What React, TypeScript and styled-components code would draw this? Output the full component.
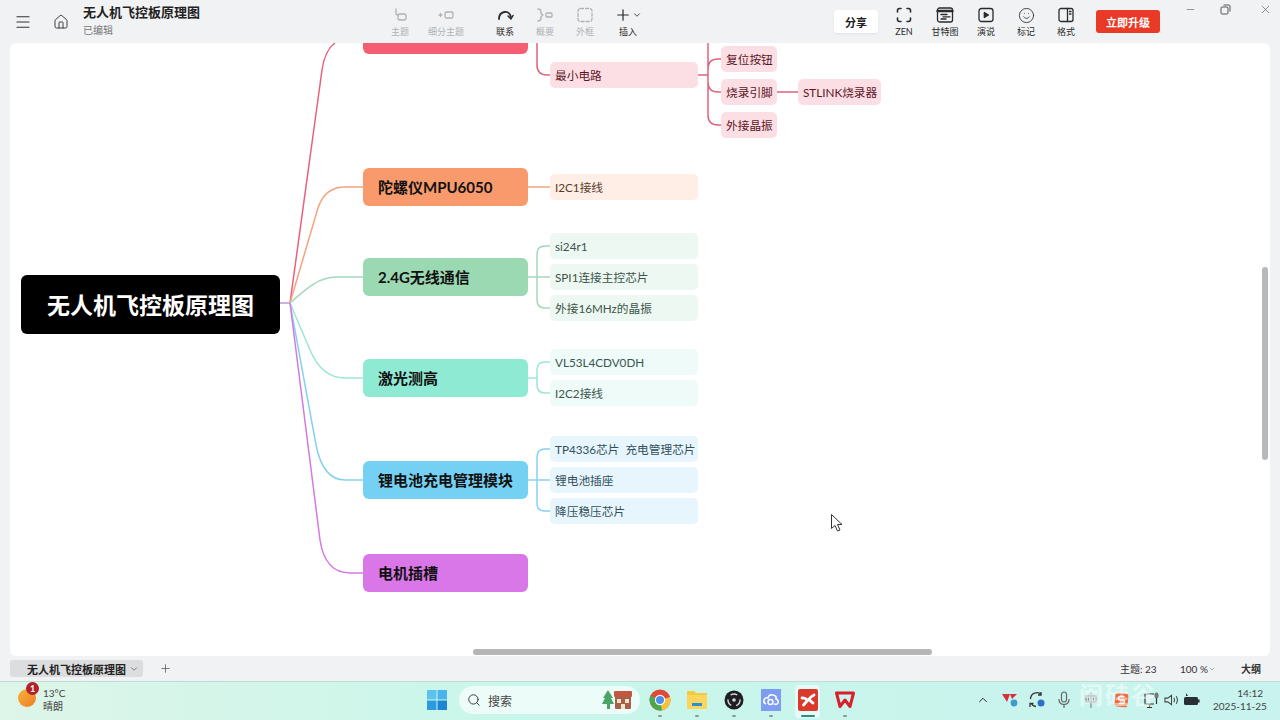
import React from 'react'
import styled, { createGlobalStyle } from 'styled-components'
import { ChevronDown, ChevronUp, House, Menu, Minus, Plus, Search, Smile, X } from 'lucide-react'

const GlobalStyle = createGlobalStyle`
  html, body { margin: 0; padding: 0; width: 1280px; height: 720px; overflow: hidden; }
  body { font-family: Lato, "Noto Sans CJK SC", sans-serif; background: #f1f2f4; color: #222; }
`

const Page = styled.div`
  position: relative;
  display: flex;
  flex-direction: column;
  width: 1280px;
  height: 720px;
  overflow: hidden;
`

/* title bar */
const TitleBar = styled.header`
  display: flex;
  align-items: flex-start;
  flex: none;
  height: 43px;
  background: #f1f2f4;
`
const DocArea = styled.div`
  display: flex;
  align-items: center;
  width: 380px;
  height: 43px;
  flex: none;
`
const BarIcon = styled.span`
  display: flex;
  align-items: center;
  justify-content: center;
  flex: none;
  width: ${p => p.$w}px;
  color: #333;
`
const DocTitle = styled.div`
  display: flex;
  flex-direction: column;
  gap: 3px;
  margin-top: -3px;
`
const DocName = styled.div`
  font-size: 13px;
  line-height: 18px;
  font-weight: 700;
  color: #222;
`
const DocState = styled.div`
  font-size: 10px;
  line-height: 13px;
  color: #777;
`
const ToolItem = styled.div`
  display: flex;
  flex-direction: column;
  align-items: center;
  flex: none;
  width: 40px;
  height: 43px;
  padding-top: 6px;
  box-sizing: border-box;
  margin-left: ${p => p.$gap || 0}px;
  color: ${p => (p.$off ? '#aeb2b6' : '#2b2b2b')};
`
const ToolIcon = styled.div`
  display: flex;
  align-items: center;
  justify-content: center;
  height: 18px;
`
const ToolLabel = styled.div`
  margin-top: 1px;
  font-size: 9px;
  line-height: 13px;
  white-space: nowrap;
`
const ShareButton = styled.button`
  flex: none;
  width: 44px;
  height: 23px;
  margin: 10px 0 0 186px;
  padding: 0;
  border: 0;
  border-radius: 3px;
  background: #fff;
  box-shadow: 0 1px 2px rgba(0, 0, 0, 0.08);
  font: 700 11px Lato, "Noto Sans CJK SC", sans-serif;
  color: #222;
`
const UpgradeButton = styled.button`
  flex: none;
  width: 64px;
  height: 23px;
  margin: 10px 0 0 10px;
  padding: 0;
  border: 0;
  border-radius: 3px;
  background: #e83a26;
  font: 700 11px Lato, "Noto Sans CJK SC", sans-serif;
  color: #fff;
`
const WindowControls = styled.div`
  display: flex;
  align-items: center;
  margin-left: 18px;
  height: 18px;
  color: #555;
`
const WinButton = styled.span`
  display: flex;
  justify-content: center;
  width: ${p => p.$w}px;
`

/* mind map canvas */
const Canvas = styled.main`
  position: relative;
  flex: 1;
  margin: 0 10px;
  background: #fff;
  border-radius: 6px;
  overflow: hidden;
`
const Links = styled.svg`
  position: absolute;
  left: 0;
  top: 0;
  width: 1260px;
  height: 613px;
  fill: none;
  stroke-width: 1.5;
`
const RootNode = styled.div`
  position: absolute;
  left: 11px;
  top: 232px;
  width: 259px;
  height: 59px;
  padding-bottom: 2px;
  box-sizing: border-box;
  display: flex;
  align-items: center;
  justify-content: center;
  background: #000;
  border-radius: 6px;
  color: #fff;
  font-size: 23px;
  font-weight: 700;
`
const TopicNode = styled.div`
  position: absolute;
  left: 353px;
  top: ${p => p.$y - 43}px;
  width: 165px;
  height: 38px;
  padding: 0 0 2px 15px;
  box-sizing: border-box;
  display: flex;
  align-items: center;
  background: ${p => p.$bg};
  border-radius: 6px;
  color: #111;
  font-size: 15px;
  font-weight: 700;
  white-space: nowrap;
`
const SubNode = styled.div`
  position: absolute;
  left: ${p => p.$x - 10}px;
  top: ${p => p.$cy - 56}px;
  width: ${p => p.$w}px;
  height: 26px;
  padding: 0 0 1px 5px;
  box-sizing: border-box;
  display: flex;
  align-items: center;
  background: ${p => p.$bg};
  border-radius: 5px;
  color: ${p => p.$fg};
  font-size: 11.7px;
  white-space: pre;
`
const VerticalThumb = styled.div`
  position: absolute;
  right: 2px;
  top: 224px;
  width: 6px;
  height: 193px;
  border-radius: 3px;
  background: #b9b9b9;
`
const HorizontalThumb = styled.div`
  position: absolute;
  left: 463px;
  bottom: 1px;
  width: 459px;
  height: 6px;
  border-radius: 3px;
  background: #b5b5b5;
`
const Pointer = styled.svg`
  position: absolute;
  left: 820px;
  top: 470px;
`

/* sheet tabs / status */
const StatusBar = styled.div`
  display: flex;
  align-items: center;
  flex: none;
  height: 25px;
  padding: 0 17px 0 10px;
  background: #f1f2f4;
  font-size: 10px;
  color: #333;
`
const SheetTab = styled.div`
  display: flex;
  align-items: center;
  width: 133px;
  height: 17px;
  padding-left: 17px;
  box-sizing: border-box;
  gap: 3px;
  background: #dcddde;
  border-radius: 3px;
  font-size: 11px;
  font-weight: 700;
  color: #222;
  white-space: nowrap;
`
const AddSheet = styled.span`
  display: flex;
  margin-left: 16px;
  color: #555;
`
const StatusRight = styled.div`
  display: flex;
  align-items: center;
  margin-left: auto;
`
const StatusText = styled.span`
  display: flex;
  align-items: center;
  width: ${p => p.$w}px;
  font-weight: ${p => (p.$strong ? 700 : 400)};
  white-space: nowrap;
`

/* windows taskbar */
const Taskbar = styled.footer`
  display: flex;
  align-items: center;
  flex: none;
  height: 39px;
  box-sizing: border-box;
  padding: 0 17px 2px 0;
  border-top: 1px solid #bcdcd5;
  background: linear-gradient(90deg, #def5e9 0%, #c9f6ea 40%, #c8f3ef 100%);
`
const Weather = styled.div`
  position: relative;
  display: flex;
  align-items: center;
  flex: none;
  width: 427px;
  padding-left: 43px;
  box-sizing: border-box;
`
const WeatherSun = styled.span`
  position: absolute;
  left: 18px;
  top: 2px;
  width: 18px;
  height: 18px;
  border-radius: 50%;
  background: linear-gradient(135deg, #f7b33a, #ee7d28);
`
const WeatherBadge = styled.span`
  position: absolute;
  left: 26px;
  top: -5px;
  width: 13px;
  height: 13px;
  border-radius: 50%;
  background: #b3202a;
  color: #fff;
  font-size: 9px;
  font-weight: 700;
  line-height: 13px;
  text-align: center;
`
const WeatherText = styled.div`
  font-size: 10px;
  line-height: 13px;
  color: #444;
`
const WinLogo = styled.svg`
  flex: none;
`
const SearchBox = styled.div`
  display: flex;
  align-items: center;
  gap: 7px;
  flex: none;
  width: 181px;
  height: 28px;
  margin-left: 12px;
  padding-left: 8px;
  box-sizing: border-box;
  border-radius: 14px;
  background: rgba(255, 255, 255, 0.65);
  color: #444;
  font-size: 12px;
`
const SearchArt = styled.svg`
  margin-left: auto;
  margin-right: 7px;
`
const AppSlot = styled.div`
  position: relative;
  display: flex;
  align-items: center;
  justify-content: center;
  flex: none;
  width: 37px;
  height: 36px;
  &::after {
    content: '';
    position: absolute;
    bottom: 1px;
    left: 50%;
    width: ${p => (p.$active ? 14 : 4)}px;
    height: 2px;
    margin-left: ${p => (p.$active ? -7 : -2)}px;
    border-radius: 1px;
    background: ${p => (p.$active ? '#2f8f86' : '#8a9a98')};
  }
  &::before {
    content: '';
    display: ${p => (p.$active ? 'block' : 'none')};
    position: absolute;
    left: 6px;
    right: 6px;
    top: 3px;
    bottom: 0;
    border-radius: 4px;
    background: rgba(255, 255, 255, 0.55);
  }
  & > svg { position: relative; }
`
const AppRow = styled.div`
  display: flex;
  margin-left: 1px;
`
const Tray = styled.div`
  display: flex;
  align-items: center;
  margin-left: auto;
`
const TraySlot = styled.span`
  display: flex;
  align-items: center;
  justify-content: center;
  flex: none;
  width: ${p => p.$w}px;
  color: #555;
`
const Clock = styled.div`
  width: 50px;
  margin-left: 12px;
  font-size: 10px;
  line-height: 13px;
  color: #444;
  text-align: right;
  white-space: nowrap;
`
const Watermark = styled.div`
  position: absolute;
  left: 1079px;
  top: 676px;
  font-size: 24px;
  font-weight: 700;
  letter-spacing: 2px;
  color: rgba(255, 255, 255, 0.5);
  pointer-events: none;
`

const subTone = {
  red: { bg: '#fcdfe4', fg: '#5c1526', line: '#e0637c' },
  orange: { bg: '#feeee6', fg: '#5d3a28', line: '#f4a37e' },
  green: { bg: '#eef8f3', fg: '#3c5448', line: '#a3d8ba' },
  teal: { bg: '#eefbf8', fg: '#3c5650', line: '#9ce6d3' },
  blue: { bg: '#e7f6fc', fg: '#34505c', line: '#86d2ee' },
}

const topics = [
  { y: 16, text: '', bg: '#f55d73' },
  { y: 168, text: '陀螺仪MPU6050', bg: '#f89a6c' },
  { y: 258, text: '2.4G无线通信', bg: '#9bd9b3' },
  { y: 359, text: '激光测高', bg: '#8eead3' },
  { y: 461, text: '锂电池充电管理模块', bg: '#74d1f4' },
  { y: 554, text: '电机插槽', bg: '#d977e8' },
]

const subs = [
  { x: 550, cy: 75, w: 148, tone: 'red', text: '最小电路' },
  { x: 721, cy: 59, w: 56, tone: 'red', text: '复位按钮' },
  { x: 721, cy: 92, w: 56, tone: 'red', text: '烧录引脚' },
  { x: 721, cy: 125, w: 56, tone: 'red', text: '外接晶振' },
  { x: 798, cy: 92, w: 83, tone: 'red', text: 'STLINK烧录器' },
  { x: 550, cy: 187, w: 148, tone: 'orange', text: 'I2C1接线' },
  { x: 550, cy: 246, w: 148, tone: 'green', text: 'si24r1' },
  { x: 550, cy: 277, w: 148, tone: 'green', text: 'SPI1连接主控芯片' },
  { x: 550, cy: 308, w: 148, tone: 'green', text: '外接16MHz的晶振' },
  { x: 550, cy: 362, w: 148, tone: 'teal', text: 'VL53L4CDV0DH' },
  { x: 550, cy: 393, w: 148, tone: 'teal', text: 'I2C2接线' },
  { x: 550, cy: 449, w: 148, tone: 'blue', text: 'TP4336芯片  充电管理芯片' },
  { x: 550, cy: 480, w: 148, tone: 'blue', text: '锂电池插座' },
  { x: 550, cy: 511, w: 148, tone: 'blue', text: '降压稳压芯片' },
]

// path coordinates are page coordinates, the viewBox shifts them onto the canvas
const links = [
  { color: '#b79ad8', d: 'M280 303 H290' },
  { color: '#e9607c', d: 'M290 303 L322 70 Q325 50 335 43' },
  { color: '#f4a37e', d: 'M290 303 L318 208 Q325 187 345 187 H363' },
  { color: '#a3d8ba', d: 'M290 303 C305 290 318 277 336 277 H363' },
  { color: '#9ce6d3', d: 'M290 303 L310 350 Q322 378 345 378 H363' },
  { color: '#86d2ee', d: 'M290 303 L316 445 Q323 480 345 480 H363' },
  { color: '#d27ae2', d: 'M290 303 L320 540 Q325 573 350 573 H363' },
  { color: '#e0637c', d: 'M537 43 V65 Q537 75 547 75 H550' },
  { color: '#e0637c', d: 'M698 75 H708 M708 43 V115 Q708 125 718 125 H721 M708 69 Q708 59 718 59 H721 M708 82 Q708 92 718 92 H721 M777 92 H798' },
  { color: '#f4a37e', d: 'M528 187 H550' },
  { color: '#a3d8ba', d: 'M528 277 H550 M550 246 H545 Q537 246 537 254 V300 Q537 308 545 308 H550' },
  { color: '#9ce6d3', d: 'M528 378 H537 M550 362 H545 Q537 362 537 370 V385 Q537 393 545 393 H550' },
  { color: '#86d2ee', d: 'M528 480 H550 M550 449 H545 Q537 449 537 457 V503 Q537 511 545 511 H550' },
]

const Line: React.FC<{ size?: number; children: React.ReactNode }> = ({ size = 18, children }) => (
  <svg width={size} height={size} viewBox='0 0 18 18' fill='none' stroke='currentColor' strokeWidth='1.3' strokeLinecap='round' strokeLinejoin='round'>
    {children}
  </svg>
)

const App: React.FC = () => (
  <Page>
    <GlobalStyle />
    <TitleBar>
      <DocArea>
        <BarIcon $w={46}><Menu size={18} strokeWidth={1.6} /></BarIcon>
        <BarIcon $w={30}><House size={16} strokeWidth={1.4} /></BarIcon>
        <BarIcon $w={7} />
        <DocTitle>
          <DocName>无人机飞控板原理图</DocName>
          <DocState>已编辑</DocState>
        </DocTitle>
      </DocArea>
      <ToolItem $off>
        <ToolIcon><Line><path d='M5 3 V7 Q5 9 7 9' /><rect x='7' y='8' width='8' height='6' rx='2' /></Line></ToolIcon>
        <ToolLabel>主题</ToolLabel>
      </ToolItem>
      <ToolItem $off $gap={6}>
        <ToolIcon><Line><path d='M2 9 H5 M3.5 7.5 V10.5' /><rect x='8' y='6' width='8' height='6' rx='1.5' /></Line></ToolIcon>
        <ToolLabel>细分主题</ToolLabel>
      </ToolItem>
      <ToolItem $gap={19}>
        <ToolIcon><Line><path d='M3 13 C3 5 13 3 15 11' strokeWidth='1.8' /><path d='M12 10 L15 13 L17 9.5' strokeWidth='1.5' /></Line></ToolIcon>
        <ToolLabel>联系</ToolLabel>
      </ToolItem>
      <ToolItem $off>
        <ToolIcon><Line><path d='M2 3 Q5 3 5 6 V7.5 L7 9 L5 10.5 V12 Q5 15 2 15' /><rect x='10' y='7' width='6' height='4' rx='1' /></Line></ToolIcon>
        <ToolLabel>概要</ToolLabel>
      </ToolItem>
      <ToolItem $off>
        <ToolIcon><Line><rect x='2' y='2.5' width='14' height='13' rx='2.5' strokeDasharray='3 2' /></Line></ToolIcon>
        <ToolLabel>外框</ToolLabel>
      </ToolItem>
      <ToolItem $gap={3}>
        <ToolIcon><Plus size={18} strokeWidth={1.6} /><ChevronDown size={10} strokeWidth={2} /></ToolIcon>
        <ToolLabel>插入</ToolLabel>
      </ToolItem>
      <ShareButton>分享</ShareButton>
      <ToolItem $gap={6}>
        <ToolIcon><Line><path d='M2.5 6 V4.5 Q2.5 2.5 4.5 2.5 H6 M12 2.5 H13.5 Q15.5 2.5 15.5 4.5 V6 M15.5 12 V13.5 Q15.5 15.5 13.5 15.5 H12 M6 15.5 H4.5 Q2.5 15.5 2.5 13.5 V12' strokeWidth='1.6' /></Line></ToolIcon>
        <ToolLabel>ZEN</ToolLabel>
      </ToolItem>
      <ToolItem $gap={1}>
        <ToolIcon><Line><rect x='1.5' y='2' width='15' height='14' rx='2' /><path d='M1.5 5 H16.5' strokeWidth='2.4' /><path d='M5 8.5 H11 M7 10.8 H14 M5 13 H10' /></Line></ToolIcon>
        <ToolLabel>甘特图</ToolLabel>
      </ToolItem>
      <ToolItem $gap={1}>
        <ToolIcon>
          <Line><rect x='2' y='2.5' width='14' height='13' rx='2.5' /><path d='M7.3 6.5 L11.5 9 L7.3 11.5 Z' fill='currentColor' /></Line>
        </ToolIcon>
        <ToolLabel>演说</ToolLabel>
      </ToolItem>
      <ToolItem>
        <ToolIcon><Smile size={17} strokeWidth={1.2} /></ToolIcon>
        <ToolLabel>标记</ToolLabel>
      </ToolItem>
      <ToolItem>
        <ToolIcon><Line><rect x='2' y='2.5' width='14' height='13' rx='2' /><path d='M10.5 2.5 V15.5' /><path d='M12.5 5.5 H14 M12.5 8 H14' /></Line></ToolIcon>
        <ToolLabel>格式</ToolLabel>
      </ToolItem>
      <UpgradeButton>立即升级</UpgradeButton>
      <WindowControls>
        <WinButton $w={24}><Minus size={11} strokeWidth={1.3} /></WinButton>
        <WinButton $w={46}>
          <svg width='11' height='11' viewBox='0 0 11 11' fill='none' stroke='currentColor' strokeWidth='1'>
            <rect x='1' y='3' width='7' height='7' rx='1' />
            <path d='M3.5 1 H9 Q10 1 10 2 V7.5' />
          </svg>
        </WinButton>
        <WinButton $w={34}><X size={13} strokeWidth={1.2} /></WinButton>
      </WindowControls>
    </TitleBar>

    <Canvas>
      <Links viewBox='10 43 1260 613'>
        {links.map(l => <path key={l.d} d={l.d} stroke={l.color} />)}
      </Links>
      <RootNode>无人机飞控板原理图</RootNode>
      {topics.map(t => <TopicNode key={t.y} $y={t.y} $bg={t.bg}>{t.text}</TopicNode>)}
      {subs.map(s => (
        <SubNode key={s.text} $x={s.x} $cy={s.cy} $w={s.w} $bg={subTone[s.tone].bg} $fg={subTone[s.tone].fg}>
          {s.text}
        </SubNode>
      ))}
      <VerticalThumb />
      <HorizontalThumb />
      <Pointer width='14' height='20' viewBox='0 0 14 20' fill='#fff' stroke='#333' strokeWidth='1'>
        <path d='M1.5 1.5 V15.5 L5 12.5 L7.5 18 L10 17 L7.5 11.5 H12 Z' />
      </Pointer>
    </Canvas>

    <StatusBar>
      <SheetTab>无人机飞控板原理图<ChevronDown size={10} color='#666' /></SheetTab>
      <AddSheet><Plus size={13} strokeWidth={1.4} /></AddSheet>
      <StatusRight>
        <StatusText $w={60}>主题: 23</StatusText>
        <StatusText $w={61}>100 %<ChevronDown size={8} color='#888' /></StatusText>
        <StatusText $w={22} $strong>大纲</StatusText>
      </StatusRight>
    </StatusBar>

    <Taskbar>
      <Weather>
        <WeatherSun />
        <WeatherBadge>1</WeatherBadge>
        <WeatherText>13°C<br />晴朗</WeatherText>
      </Weather>
      <WinLogo width='20' height='20' viewBox='0 0 20 20'>
        <rect x='0' y='0' width='9.5' height='9.5' fill='#5cc3ee' />
        <rect x='10.5' y='0' width='9.5' height='9.5' fill='#4ab5ea' />
        <rect x='0' y='10.5' width='9.5' height='9.5' fill='#2a9be0' />
        <rect x='10.5' y='10.5' width='9.5' height='9.5' fill='#1c86d4' />
      </WinLogo>
      <SearchBox>
        <Search size={14} strokeWidth={1.6} color='#333' />
        搜索
        <SearchArt width='32' height='22' viewBox='0 0 32 22'>
          <path d='M7 1 L12 9 H10 L13 15 H9 V20 H6 V15 H1 L4 9 H2 Z' fill='#4aa564' />
          <rect x='14' y='3' width='16' height='17' rx='1' fill='#a5604a' />
          <rect x='13' y='2' width='18' height='6' rx='1' fill='#c2583f' />
          <rect x='16' y='10' width='4' height='4' fill='#f4e3c8' />
          <rect x='24' y='10' width='4' height='4' fill='#f4e3c8' />
          <rect x='20' y='15' width='4' height='5' fill='#f4e3c8' />
        </SearchArt>
      </SearchBox>
      <AppRow>
        <AppSlot>
          <svg width='22' height='22' viewBox='0 0 22 22'>
            <circle cx='11' cy='11' r='10.5' fill='#e0483c' />
            <path d='M11 11 L2 16 A10.5 10.5 0 0 1 1.5 6.5 Z' fill='#4aa84f' />
            <path d='M11 11 L2 16 A10.5 10.5 0 0 0 15 20.7 Z' fill='#4aa84f' />
            <path d='M11 11 L21 8 A10.5 10.5 0 0 1 13 21.3 Z' fill='#f5c33b' />
            <circle cx='11' cy='11' r='5.2' fill='#fff' />
            <circle cx='11' cy='11' r='4' fill='#4b8fe8' />
          </svg>
        </AppSlot>
        <AppSlot>
          <svg width='22' height='20' viewBox='0 0 22 20'>
            <path d='M1 2 Q1 1 2 1 H8 L10 3 H21 V18 Q21 19 20 19 H2 Q1 19 1 18 Z' fill='#f6c93f' />
            <rect x='1' y='5' width='20' height='14' rx='1' fill='#fbd65a' />
            <rect x='6' y='13' width='10' height='3' fill='#2a8fd8' />
          </svg>
        </AppSlot>
        <AppSlot>
          <svg width='20' height='20' viewBox='0 0 20 20' fill='none'>
            <circle cx='10' cy='10' r='9.5' fill='#1d1f22' />
            <circle cx='10' cy='10' r='6' stroke='#d8d8d8' strokeWidth='1.4' strokeDasharray='7 5' />
            <circle cx='10' cy='10' r='1.8' fill='#d8d8d8' />
          </svg>
        </AppSlot>
        <AppSlot>
          <svg width='20' height='22' viewBox='0 0 20 22' fill='none'>
            <rect width='20' height='22' fill='#7d9cf2' />
            <path d='M5 15 Q2 14 3 11 Q4 8 7 9 Q8 5 12 6 Q16 7 15 10 Q18 11 17 14 Q16 16 13 15' stroke='#fff' strokeWidth='1.6' />
            <circle cx='9.5' cy='13' r='2.5' stroke='#fff' strokeWidth='1.4' />
          </svg>
        </AppSlot>
        <AppSlot $active>
          <svg width='20' height='22' viewBox='0 0 20 22' fill='none'>
            <rect width='20' height='22' rx='2' fill='#d93a2b' />
            <path d='M4 9 Q7 8.5 9.5 11.5 L5.5 16 M16 6 Q13 7.5 11 10 Q13 13 15 14' stroke='#fff' strokeWidth='2.8' strokeLinecap='round' />
          </svg>
        </AppSlot>
        <AppSlot>
          <svg width='20' height='18' viewBox='0 0 20 18' fill='none'>
            <path d='M1.5 2 H18.5 L15 15.5 L10 9 L5 15.5 Z' stroke='#d8202c' strokeWidth='3' strokeLinejoin='round' />
          </svg>
        </AppSlot>
      </AppRow>
      <Tray>
        <TraySlot $w={27}><ChevronUp size={14} strokeWidth={1.6} color='#222' /></TraySlot>
        <TraySlot $w={27}>
          <svg width='16' height='14' viewBox='0 0 16 14'>
            <path d='M0 1 H8 L5 9 Z' fill='#d8303a' />
            <path d='M8 1 H15 L10 6 Z' fill='#d8303a' />
            <circle cx='12' cy='10' r='3.4' fill='#3f9ccc' />
          </svg>
        </TraySlot>
        <TraySlot $w={27}>
          <svg width='18' height='18' viewBox='0 0 18 18' fill='none' stroke='#333' strokeWidth='1.3'>
            <path d='M2.5 8 A6.5 6.5 0 0 1 13.5 3.5 M13 1 V4 H10' />
            <path d='M3 12 A6.5 6.5 0 0 0 8 15.5 M2 16 V12.5 H5.5' />
            <circle cx='13' cy='12' r='3.5' fill='#2f6fc8' stroke='none' />
          </svg>
        </TraySlot>
        <TraySlot $w={27}>
          <svg width='12' height='18' viewBox='0 0 12 18' fill='none' stroke='#666' strokeWidth='1.2'>
            <rect x='3.5' y='1' width='5' height='10' rx='2.5' />
            <path d='M1 8 Q1 13.5 6 13.5 Q11 13.5 11 8 M6 13.5 V17' />
          </svg>
        </TraySlot>
        <TraySlot $w={27}>
          <svg width='14' height='18' viewBox='0 0 14 18' fill='none' stroke='#8a9a9a' strokeWidth='1.4'>
            <path d='M7 1 V17 M2 5 H12 V11 H2 Z M4.5 5 V11 M9.5 5 V11' />
          </svg>
        </TraySlot>
        <TraySlot $w={35}>
          <svg width='15' height='16' viewBox='0 0 15 16' fill='none'>
            <rect x='1' y='1' width='13' height='14' rx='3' fill='#ef6a3c' transform='rotate(6 7.5 8)' />
            <path d='M10.5 4.5 H6 Q4.5 4.5 4.5 6.5 Q4.5 8 6 8 H9 Q10.5 8 10.5 9.5 Q10.5 11.5 9 11.5 H4.5' stroke='#fff' strokeWidth='1.6' />
          </svg>
        </TraySlot>
        <TraySlot $w={25}>
          <svg width='18' height='18' viewBox='0 0 18 18' fill='none' stroke='#333' strokeWidth='1.2'>
            <path d='M11 3 H2 V13 H11' />
            <path d='M6.5 13 V16 M4 16.5 H9' />
            <rect x='11.5' y='1.5' width='4' height='6' rx='2' fill='#777' stroke='none' />
            <path d='M13.5 7 V13' />
          </svg>
        </TraySlot>
        <TraySlot $w={16}>
          <svg width='17' height='14' viewBox='0 0 17 14' fill='none' stroke='#444' strokeWidth='1.1'>
            <path d='M1 5 H4 L8 2 V12 L4 9 H1 Z' />
            <path d='M10.5 4.5 Q12 7 10.5 9.5 M13 3 Q15.5 7 13 11' />
          </svg>
        </TraySlot>
        <TraySlot $w={21}>
          <svg width='18' height='14' viewBox='0 0 18 14'>
            <rect x='2' y='4' width='14' height='8' rx='1.5' fill='#2a2f33' />
            <rect x='16' y='6.5' width='1.6' height='3' fill='#2a2f33' />
            <path d='M4 0 L6 3 L4 3 Z' fill='#2a2f33' />
          </svg>
        </TraySlot>
        <Clock>14:12<br />2025-11-25</Clock>
      </Tray>
    </Taskbar>
    <Watermark>闽硅谷</Watermark>
  </Page>
)

export default App
